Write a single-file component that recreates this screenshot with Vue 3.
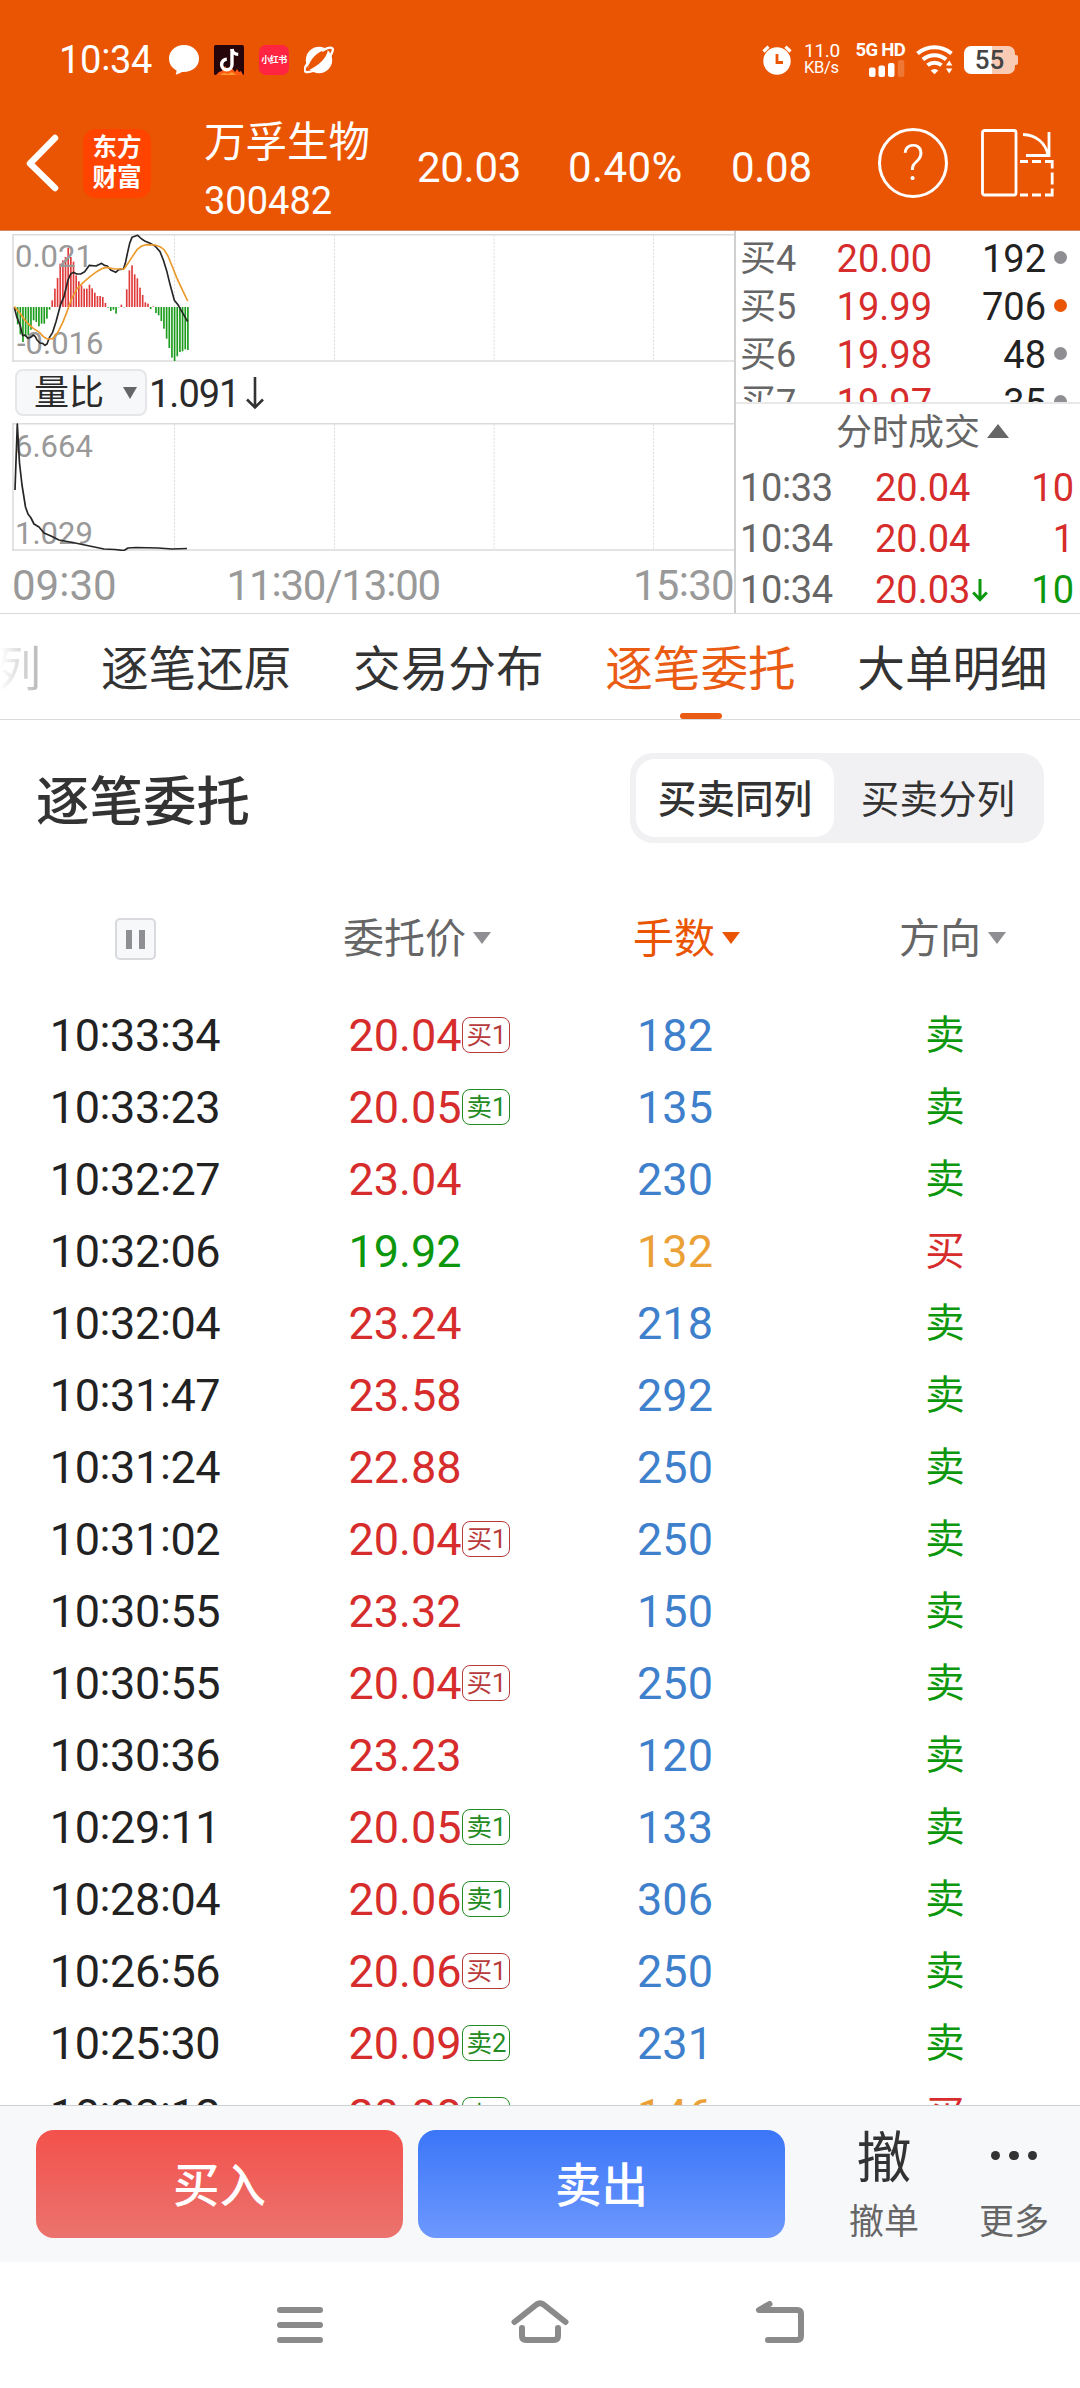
<script setup>
import { h } from 'vue'

// Time text with vertically centred colons
const Clock = (props) =>
  h('span', props.t.split(/(:)/).map((s) => (s === ':' ? h('span', { class: 'colon' }, s) : s)))
Clock.props = ['t']

const bids = [
  { level: '买4', price: '20.00', qty: '192', hot: false },
  { level: '买5', price: '19.99', qty: '706', hot: true },
  { level: '买6', price: '19.98', qty: '48', hot: false },
  { level: '买7', price: '19.97', qty: '35', hot: false },
]

const trades = [
  { time: '10:33', price: '20.04', qty: '10', dir: 'red' },
  { time: '10:34', price: '20.04', qty: '1', dir: 'red' },
  { time: '10:34', price: '20.03', qty: '10', dir: 'green', down: true },
]

const tabs = ['逐笔还原', '交易分布', '逐笔委托', '大单明细']

const orders = [
  ['10:33:34', '20.04', '买1', '182', '卖'],
  ['10:33:23', '20.05', '卖1', '135', '卖'],
  ['10:32:27', '23.04', '', '230', '卖'],
  ['10:32:06', '19.92', '', '132', '买'],
  ['10:32:04', '23.24', '', '218', '卖'],
  ['10:31:47', '23.58', '', '292', '卖'],
  ['10:31:24', '22.88', '', '250', '卖'],
  ['10:31:02', '20.04', '买1', '250', '卖'],
  ['10:30:55', '23.32', '', '150', '卖'],
  ['10:30:55', '20.04', '买1', '250', '卖'],
  ['10:30:36', '23.23', '', '120', '卖'],
  ['10:29:11', '20.05', '卖1', '133', '卖'],
  ['10:28:04', '20.06', '卖1', '306', '卖'],
  ['10:26:56', '20.06', '买1', '250', '卖'],
  ['10:25:30', '20.09', '卖2', '231', '卖'],
  ['10:23:12', '20.08', '卖1', '146', '买'],
].map(([time, price, badge, qty, side]) => ({ time, price, badge, qty, side }))

// MACD histogram, one bar per minute, positive is up
const macd = [
  -10, -52, -82, -105, -90, -85, -68, -40, -45, -58, -50, -50, -35, -8, 20, 55, 87, 130, 140, 150,
  177, 150, 136, 95, 77, 65, 55, 55, 67, 56, 43, 33, 33, 30, 12, -2, -12, -8, -20, -1, 7, -1, 53,
  110, 125, 98, 86, 58, 36, 14, 10, -6, 2, -18, -25, -42, -65, -95, -123, -152, -162, -148, -135,
  -133, -127, -129,
]
const bars = macd.map((v, i) => ({
  x: 42.5 + i * 7.98,
  y: v > 0 ? 219 - v : 219,
  h: Math.abs(v),
  up: v > 0,
}))

const gridX = [162, 322, 481.5, 641]
</script>

<template>
  <div class="screen">
    <header class="top">
      <div class="status">
        <Clock class="clock" t="10:34" />
        <svg class="s-bubble" width="30" height="30" viewBox="0 0 30 30"><path d="M15 0C6.500 0 0 6 0 13.600c0 5.400 3 9.600 7.600 12-.1 1.500-.4 2.800-.9 3.900 2.300-.3 4.400-1.200 6-2.500C23 27.500 30 22 30 13.600 30 6 23.500 0 15 0z" fill="#fff" /></svg>
        <svg class="s-tok" width="30" height="30" viewBox="0 0 30 30">
          <rect width="30" height="30" rx="1.500" fill="#26060b" />
          <path d="M2 30l3-3 3-1 3-5 3 4 3-3 4 5 2-3 2 3 2-1 2 4z" fill="#ff5a12" />
          <path d="M6 30l4-2 4 1 4-2 4 3z" fill="#ff9b2e" />
          <path d="M18 4v15.500a5.200 5.200 0 1 1-5.200-5.200" fill="none" stroke="#fff" stroke-width="3.400" />
          <path d="M18 4c.5 3.200 2.800 5.200 6.200 5.400" fill="none" stroke="#fff" stroke-width="3.200" />
        </svg>
        <span class="s-red">小红书</span>
        <svg class="s-planet" width="30" height="28" viewBox="0 0 30 28">
          <circle cx="15" cy="14" r="13.200" fill="#fff" />
          <path d="M4 20C9 9 17 4 24 3.500C23 12 14 20 5 24z" fill="#ea5504" />
          <path d="M5 16C0 21-.5 25 2 26c3 .8 7-1 11-3" fill="none" stroke="#fff" stroke-width="2.400" />
          <path d="M18 5C23 2 27 1 28.500 2.500C30 4.500 27 9 25 12" fill="none" stroke="#fff" stroke-width="2.400" />
        </svg>
        <span class="grow"></span>
        <svg class="s-alarm" width="30" height="30" viewBox="0 0 30 30">
          <circle cx="15" cy="16" r="13.700" fill="#fff" />
          <path d="M1.500 6.500L6.500 1.700M28.500 6.500l-5-4.800" stroke="#fff" stroke-width="3.200" />
          <path d="M15 9v8.500h6" fill="none" stroke="#ea5504" stroke-width="2.800" />
        </svg>
        <div class="speed"><span>11.0</span><span class="unit">KB/s</span></div>
        <div class="cell">
          <span>5G HD</span>
          <svg width="36" height="17" viewBox="0 0 36 17" fill="#fff">
            <rect x="0" y="7.500" width="6.500" height="9.500" rx="2" /><rect x="9.500" y="5.500" width="6.500" height="11.500" rx="2" />
            <rect x="19" y="3" width="6.500" height="14" rx="2" /><rect x="28.800" y="0" width="6.500" height="17" rx="2" opacity=".2" />
          </svg>
        </div>
        <svg class="s-wifi" width="38" height="31" viewBox="0 0 38 31" fill="none" stroke="#fff">
          <path d="M1.500 9.500a26 26 0 0 1 34 0" stroke-width="4" />
          <path d="M6.800 15.500a18 18 0 0 1 23.400 0" stroke-width="4" />
          <path d="M11.500 21.300a11 11 0 0 1 14 0" stroke-width="4" />
          <path d="M14.700 26.500a5.500 5.500 0 0 1 7.600 0l-3.800 3.800z" fill="#fff" stroke="none" />
          <path d="M30 21.500l3.200-5 3.200 5zM30 24.500l3.200 5 3.200-5z" fill="#fff" stroke="none" />
        </svg>
        <div class="battery"><span>55</span></div>
      </div>
      <div class="quote">
        <svg class="back" width="34" height="58" viewBox="0 0 34 58"><path d="M30 4L5 29.500L30 54" fill="none" stroke="#fff" stroke-width="6.500" stroke-linecap="round" stroke-linejoin="round" /></svg>
        <div class="logo"><span>东方</span><span>财富</span></div>
        <div class="name"><span class="cn">万孚生物</span><span class="code">300482</span></div>
        <span class="q q1">20.03</span>
        <span class="q q2">0.40%</span>
        <span class="q q3">0.08</span>
        <div class="help">?</div>
        <svg class="rotate" width="74" height="70" viewBox="0 0 74 70" fill="none" stroke="#fff" stroke-width="2.800">
          <rect x="2.500" y="2.500" width="33.500" height="64.500" rx="2" />
          <path d="M43 6.500C56 7 66 15 68 27.500M69 4v23.500H46" />
          <path d="M40 33.500h8m4 0h9m4 0h7.200v7m0 4v12m0 4v6.500H65m-4 0h-9m-4 0h-8" />
        </svg>
      </div>
    </header>

    <section class="market">
      <div class="charts">
        <div class="chart c1">
          <svg width="722" height="128" viewBox="0 0 722 128">
            <line v-for="x in gridX" :key="x" :x1="x + 0.5" :x2="x + 0.5" y1="1" y2="127" stroke="#ddd" stroke-dasharray="2 1.500" />
            <path d="M0 .8H722M0 127H722M1 0V128" stroke="#dcdcdc" stroke-width="1.600" />
            <g transform="translate(-12 0) scale(.33333)">
              <rect v-for="(b, i) in bars" :key="i" :x="b.x" :y="b.y" width="5" :height="b.h" :fill="b.up ? '#e03c3c' : '#1c9c1c'" />
            </g>
          </svg>
          <span class="lab up">0.021</span><span class="lab low">-0.016</span>
          <svg class="over" width="722" height="128" viewBox="36 27 2166 384" fill="none" stroke-linejoin="round" stroke-width="5">
            <path stroke="#262626" d="M43 247L50 275L60 300L68 332L75 330L84 340L92 337L100 330L106 335L111 345L120 354L128 355L135 361L141 357L148 338L158 322L168 290L176 260L182 238L192 215L204 165L212 147L220 142L230 147L242 147L254 140L268 121L288 123L305 115L313 121L322 123L332 135L347 142L356 134L370 132L376 115L382 86L389 55L396 37L413 31L425 42L436 49L450 55L465 63L480 80L490 105L500 137L510 178L523 226L535 241L563 290" />
            <path stroke="#ec9a2c" d="M43 245L58 262L72 282L85 297L100 310L118 322L130 335L142 342L158 341L172 325L188 293L200 263L215 220L232 190L250 172L270 155L290 140L305 131L320 127L345 132L372 132L382 118L397 95L412 73L425 63L440 59L465 60L480 65L492 74L504 93L515 120L530 158L545 190L563 228" />
          </svg>
        </div>
        <div class="pick">
          <div class="drop"><span>量比</span><i class="tri down"></i></div>
          <span class="val">1.091</span>
          <svg width="20" height="34" viewBox="0 0 20 34"><path d="M10 1v30M2 23.500l8 8 8-8" fill="none" stroke="#333" stroke-width="2.600" /></svg>
        </div>
        <div class="chart c2">
          <svg width="722" height="128" viewBox="0 0 722 128">
            <line v-for="x in gridX" :key="x" :x1="x + 0.5" :x2="x + 0.5" y1="1" y2="127" stroke="#ddd" stroke-dasharray="2 1.500" />
            <path d="M0 .8H722M0 127H722M1 0V128" stroke="#dcdcdc" stroke-width="1.600" />
          </svg>
          <span class="lab up">6.664</span><span class="lab low">1.029</span>
          <svg class="over" width="722" height="128" viewBox="0 0 722 128" fill="none" stroke-linejoin="round" stroke-width="1.700">
            <path stroke="#262626" d="M3 67L5.300 1L7.500 40L10 62L13.500 84L16 91L19 95L22 101L27 104L32 110L39 113L47 117L58 119L68 121L80 123.500L92 126L103 126.500L112 127.500L116 125L124 124.500L146 125L160 126L175 125.500" />
          </svg>
        </div>
        <div class="axis"><Clock t="09:30" /><Clock class="mid" t="11:30/13:00" /><Clock class="end" t="15:30" /></div>
      </div>
      <div class="book">
        <div class="bids">
          <div v-for="b in bids" :key="b.level" class="bid">
            <span class="lv">{{ b.level }}</span><span class="pr red">{{ b.price }}</span><span class="qt">{{ b.qty }}</span><i class="dot" :class="{ hot: b.hot }"></i>
          </div>
        </div>
        <div class="ticks">
          <div class="ticks-head">分时成交<i class="tri up"></i></div>
          <div v-for="(t, i) in trades" :key="i" class="tick">
            <Clock class="tm" :t="t.time" /><span class="pr red">{{ t.price }}</span>
            <span class="arr"><svg v-if="t.down" width="16" height="23" viewBox="0 0 16 23"><path d="M8 0v20M1.200 13.500L8 20.500l6.800-7" fill="none" stroke="#0c970c" stroke-width="3" /></svg></span>
            <span class="qt" :class="t.dir">{{ t.qty }}</span>
          </div>
        </div>
      </div>
    </section>

    <nav class="tabs">
      <span class="cut">列</span>
      <span v-for="t in tabs" :key="t" class="tab" :class="{ on: t === '逐笔委托' }">{{ t }}</span>
    </nav>

    <section class="title-row">
      <h2>逐笔委托</h2>
      <div class="seg"><span class="sel">买卖同列</span><span>买卖分列</span></div>
    </section>

    <section class="list">
      <div class="row head">
        <div><span class="pause"><i></i><i></i></span></div>
        <div class="h-price">委托价<i class="tri down"></i></div>
        <div class="h-qty on">手数<i class="tri down"></i></div>
        <div class="h-side">方向<i class="tri down"></i></div>
      </div>
      <div v-for="(o, i) in orders" :key="i" class="row">
        <div class="time"><Clock :t="o.time" /></div>
        <div>
          <span class="price" :class="o.price < '20' ? 'green' : 'red'">{{ o.price }}<b v-if="o.badge" :class="o.badge[0] === '买' ? 'buy' : 'sell'">{{ o.badge }}</b></span>
        </div>
        <div :class="o.side === '买' ? 'amber' : 'blue'">{{ o.qty }}</div>
        <div class="side" :class="o.side === '买' ? 'red' : 'green'">{{ o.side }}</div>
      </div>
    </section>

    <footer class="actions">
      <button class="btn buy-btn">买入</button>
      <button class="btn sell-btn">卖出</button>
      <div class="act a1"><span class="big">撤</span><span>撤单</span></div>
      <div class="act a2"><span class="dots"><i></i><i></i><i></i></span><span>更多</span></div>
    </footer>

    <div class="sysnav">
      <svg width="1080" height="126" viewBox="0 0 1080 126" fill="none" stroke="#8a8a8a" stroke-width="6" stroke-linecap="round" stroke-linejoin="round">
        <path d="M280 48H320M280 63H320M280 78H320" />
        <path d="M514.500 60L536.500 42.500Q540 40 543.500 42.500L565.500 60" />
        <path d="M522 66V74Q522 78 526 78H554Q558 78 558 74V66" />
        <path d="M769.500 42L759 48H797Q801 48 801 52V74Q801 78 797 78H768" />
      </svg>
    </div>
  </div>
</template>

<style>
html, body { margin: 0; background: #fff; }
.colon { position: relative; top: -.085em; }
</style>

<style scoped>
* { box-sizing: border-box; }
.screen {
  width: 1080px; height: 2388px; overflow: hidden; display: flex; flex-direction: column;
  background: #fff; color: #222; font-family: Roboto, "Noto Sans CJK SC", sans-serif;
}
i { font-style: normal; display: block; }
.red { color: #d62c2c; }
.green { color: #0c970c; }
.blue { color: #3f80cc; }
.amber { color: #eba136; }
.grow { flex: 1; }
.tri { width: 0; height: 0; flex: none; }

.top { height: 231px; background: #ea5504; color: #fff; border-bottom: 1px solid #d08a68; flex: none; }
.status { height: 119px; display: flex; align-items: center; padding-left: 59px; padding-right: 60px; }
.status > * { flex: none; }
.status > .grow { flex: 1; }
.clock { font-size: 38px; line-height: 44px; width: 110px; margin-top: 1px; white-space: nowrap; letter-spacing: -.3px; }
.s-tok { margin-left: 15px; }
.s-red {
  margin-left: 15px; width: 30px; height: 30px; border-radius: 7px; background: #ff2442;
  font-size: 9px; font-weight: 700; line-height: 30px; text-align: center; white-space: nowrap; letter-spacing: -.5px;
}
.s-planet { margin-left: 15px; }
.speed { display: flex; flex-direction: column; margin: -1px 0 0 12px; width: 37px; font-size: 19px; line-height: 17px; letter-spacing: -.3px; white-space: nowrap; }
.speed .unit { font-size: 16.500px; }
.cell { width: 50px; margin-left: 14px; display: flex; flex-direction: column; align-items: flex-end; font-size: 18.500px; font-weight: 700; line-height: 16px; white-space: nowrap; letter-spacing: -.7px; }
.cell svg { margin-top: 2px; }
.s-wifi { margin-left: 11px; }
.battery {
  position: relative; margin-left: 10px; width: 51px; height: 28px; border-radius: 7px;
  background: linear-gradient(90deg, #fff 55%, #facbb4 55%); color: #444;
  font-size: 26px; font-weight: 500; line-height: 29px; text-align: center; margin-top: 1px; margin-right: 5px;
}
.battery::after { content: ""; position: absolute; right: -3px; top: 9px; width: 3px; height: 10px; background: #facbb4; border-radius: 0 2px 2px 0; }

.quote { height: 111px; display: flex; align-items: flex-start; padding-left: 25px; }
.quote > * { flex: none; }
.back { margin-top: 15px; }
.logo {
  width: 68px; height: 69px; margin: 10px 0 0 24px; border-radius: 13px; background: #ff4400;
  display: flex; flex-direction: column; align-items: center; padding-top: 4px;
  font-size: 24.500px; line-height: 30px; font-weight: 700;
}
.name { margin-left: 53px; width: 213px; display: flex; flex-direction: column; white-space: nowrap; }
.cn { font-size: 41.500px; line-height: 44px; margin-top: 2px; }
.code { font-size: 38px; line-height: 44px; margin-top: 14px; }
.q { font-size: 42px; line-height: 48px; margin-top: 25px; white-space: nowrap; letter-spacing: -.3px; }
.q1 { width: 151px; }
.q2 { width: 163px; letter-spacing: .4px; }
.q3 { width: 147px; }
.help { width: 70px; height: 70px; border: 3px solid #fff; border-radius: 50%; margin-top: 9px; font-size: 50px; line-height: 65px; text-align: center; font-weight: 300; }
.rotate { margin: 9px 0 0 32px; }

.market { height: 383px; display: flex; flex: none; border-bottom: 1px solid #dadada; }
.charts { width: 734px; padding-left: 12px; display: flex; flex-direction: column; flex: none; }
.chart { position: relative; height: 128px; width: 722px; flex: none; }
.chart svg { display: block; }
.c1 { margin-top: 3px; }
.chart .over { position: absolute; left: 0; top: 0; }
.lab { position: absolute; left: 3px; font-size: 31px; line-height: 36px; color: #999; }
.lab.up { top: 6px; }
.lab.low { top: 93px; }
.c1 .lab.up { top: 5px; }
.c1 .lab.low { left: 5px; top: 92px; }
.pick { height: 61px; display: flex; align-items: center; flex: none; color: #2a2a2a; }
.drop {
  width: 132px; height: 47px; margin-left: 3px; border: 2px solid #e4e6ea; border-radius: 8px; background: #f7f8fa;
  display: flex; align-items: center; padding-left: 17px; font-size: 35px; line-height: 43px;
}
.drop span { margin-top: 2px; }
.drop .tri { margin-left: 19px; border: 7.500px solid transparent; border-top: 12px solid #666; border-bottom: 0; }
.val { font-size: 38px; line-height: 44px; margin: 2px 6px 0 2px; letter-spacing: -1px; }
.axis { display: flex; font-size: 42px; line-height: 50px; color: #999; margin-top: 10px; white-space: nowrap; }
.axis .mid { margin-left: 110px; letter-spacing: -1.200px; }
.axis .end { margin-left: auto; letter-spacing: -.7px; }
.book { flex: 1; border-left: 2px solid #d0d0d0; display: flex; flex-direction: column; }
.bids { height: 173px; overflow: hidden; border-bottom: 2px solid #e8e8e8; padding-top: 4px; flex: none; }
.bid { height: 48px; display: flex; align-items: center; padding: 0 13px 0 4px; font-size: 38px; line-height: 48px; }
.lv { width: 90px; color: #666; font-size: 36px; }
.bid .pr { width: 102px; text-align: right; }
.bid .qt { width: 114px; text-align: right; color: #222; margin-right: 8px; }
.dot { width: 13px; height: 13px; border-radius: 50%; background: #8e8e93; margin-top: -4px; }
.dot.hot { background: #ea5504; }
.ticks-head { height: 59px; display: flex; align-items: center; padding-left: 100px; font-size: 36px; line-height: 59px; color: #666; }
.tri.up { border: 11px solid transparent; border-bottom: 14px solid #666; border-top: 0; margin: -6px 0 0 7px; }
.tick { height: 51px; display: flex; align-items: center; padding-left: 4px; font-size: 38px; line-height: 51px; }
.tm { width: 135px; color: #666; letter-spacing: -.4px; }
.tick .pr { width: 95px; text-align: right; }
.arr { width: 20px; padding-left: 2px; display: flex; }
.tick .qt { flex: 1; text-align: right; padding-right: 6px; }

.tabs { height: 106px; display: flex; flex: none; border-bottom: 1px solid #dadada; font-size: 47.600px; line-height: 112px; color: #333; white-space: nowrap; }
.cut { width: 41px; margin-right: 60px; direction: rtl; color: transparent; background: linear-gradient(90deg, #fff, #b5b5b5); background-clip: text; }
.tab { width: 192px; margin-right: 60.100px; flex: none; position: relative; }
.tab.on { color: #ea5b14; }
.tab.on::after { content: ""; position: absolute; left: 75px; bottom: 0; width: 42px; height: 6px; border-radius: 3px; background: #ea5b14; }

.title-row { height: 156px; flex: none; display: flex; justify-content: space-between; align-items: center; padding: 0 36px; }
h2 { margin: 9px 0 0; font-size: 53.500px; line-height: 70px; font-weight: 500; color: #333; }
.seg { width: 414px; height: 90px; border-radius: 23px; background: #f1f1f4; padding: 6px; display: flex; font-size: 38.600px; line-height: 82px; color: #333; }
.seg span { width: 198px; text-align: center; flex: none; margin-right: 5px; white-space: nowrap; }
.seg .sel { background: #fff; border-radius: 19px; font-weight: 500; height: 78px; }

.list { height: 1229px; overflow: hidden; flex: none; padding-top: 27px; }
.row { display: flex; height: 72px; align-items: center; font-size: 45px; line-height: 72px; color: #222; }
.row > div { width: 270px; display: flex; justify-content: center; flex: none; }
.row .time { letter-spacing: -.4px; }
.row .red { color: #d62c2c; }
.row .green { color: #0c970c; }
.row .blue { color: #3f80cc; }
.row .amber { color: #eba136; }
.row.head { height: 72px; margin-bottom: 25px; font-size: 41px; line-height: 75px; color: #666; }
.row.head > div { align-items: center; color: #666; }
.row.head > .on { color: #ea5504; }
.head .tri { border: 9px solid transparent; border-top: 12px solid #8e8e93; border-bottom: 0; margin: -3px 0 0 7px; }
.head .on .tri { border-top-color: #ea5504; }
.row > .h-price { padding-left: 24px; }
.row > .h-qty { padding-left: 23px; }
.row > .h-side { padding-left: 15px; }
.pause { width: 41px; height: 42px; border: 2px solid #d8dade; border-radius: 5px; background: #f7f8fa; display: flex; align-items: center; justify-content: center; gap: 7px; }
.pause i { width: 6px; height: 19px; background: #8e8e93; }
.price { position: relative; }
.price b {
  position: absolute; left: 100%; top: 17px; height: 36px; border: 1.500px solid; border-radius: 8px; padding: 0 3px 0 4px;
  font-size: 25.500px; line-height: 34px; font-weight: 400; white-space: nowrap;
}
.price .buy { color: #b83a3a; }
.price .sell { color: #228b22; }
.row .side { font-size: 39.500px; }

.actions { height: 157px; flex: none; background: #f7f8fa; border-top: 1px solid #cdd0d2; display: flex; padding-left: 36px; }
.btn { width: 367px; height: 108px; margin: 24px 11px 0 0; border: 0; border-radius: 18px; padding: 0; color: #fff; font: 500 46.500px/112px Roboto, "Noto Sans CJK SC", sans-serif; flex: none; }
.btn + .btn { margin-left: 4px; }
.buy-btn { background: linear-gradient(#f3514b, #eb736e); }
.sell-btn { background: linear-gradient(#3b76f8, #6d98fe); }
.act { display: flex; flex-direction: column; align-items: center; font-size: 35px; line-height: 44px; color: #666; width: 130px; flex: none; }
.a1 { margin-left: 23px; }
.big { font-size: 55px; line-height: 60px; color: #333; margin: 22px 0 0; }
.act .big + span, .act .dots + span { margin-top: 13px; line-height: 44px; }
.dots { height: 60px; margin-top: 22px; display: flex; gap: 9px; align-items: center; padding-bottom: 5px; }
.dots i { width: 9.500px; height: 9.500px; border-radius: 50%; background: #333; }
.sysnav { height: 126px; flex: none; background: #fff; }
.sysnav svg { display: block; }
</style>
